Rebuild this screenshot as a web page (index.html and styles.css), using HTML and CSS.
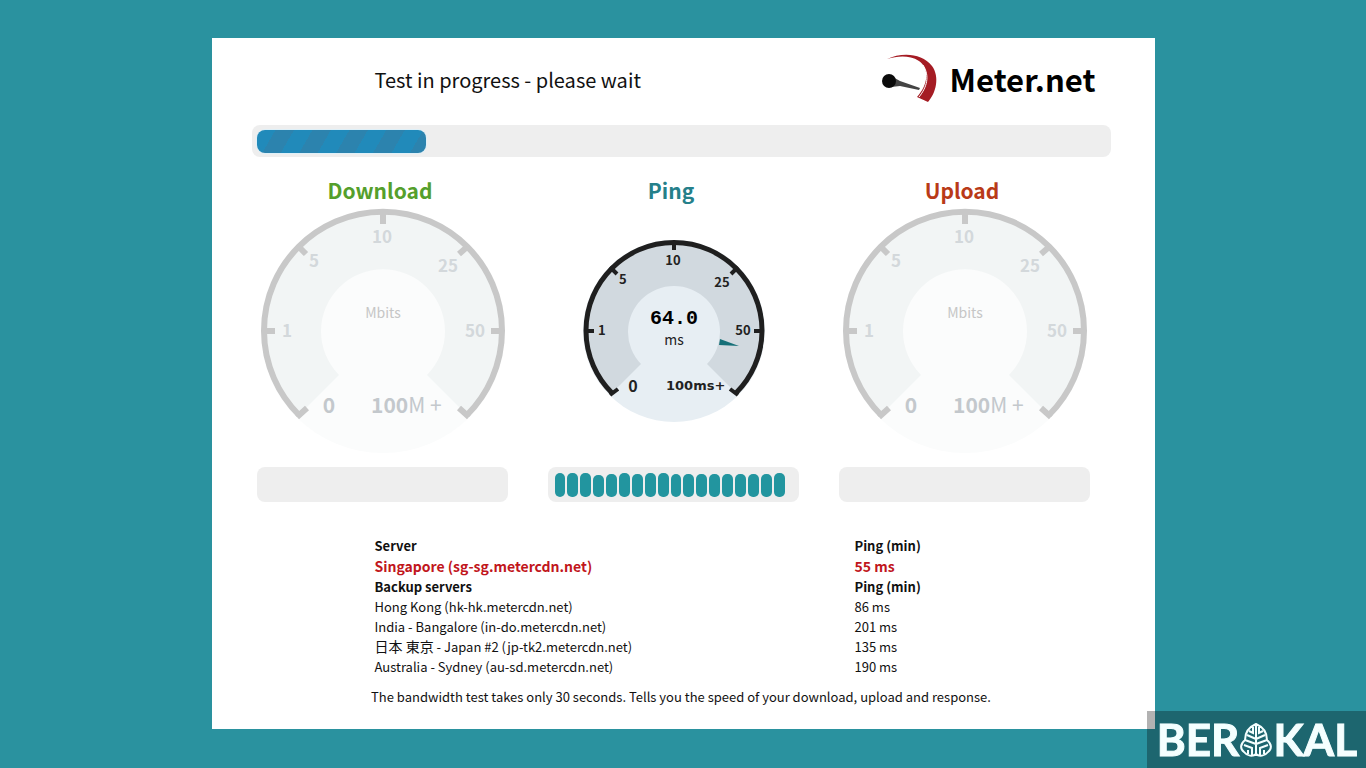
FILE: index.html
```
<!DOCTYPE html>
<html lang="en">
<head>
    <meta charset="UTF-8">
    <meta name="viewport" content="width=device-width, initial-scale=1.0">
    <title>Meter.net - Speed Test</title>
    <link rel="stylesheet" href="styles.css">
</head>
<body>
    <main class="container">
        <header class="header">
            <h1 class="status">Test in progress - please wait</h1>
            <a class="logo" href="#">
                <svg class="logo-icon" viewBox="0 0 66 60" aria-hidden="true">
                    <path d="M11 10 C26 3 46 4 56 17 C64 28 60 44 52 53 L41 48 C52 36 54 20 43 12 C33 6 22 7 11 10Z" fill="#a51c24"/>
                    <path d="M47 16 C54 27 51 38 43 48" fill="none" stroke="#fff" stroke-width="1"/>
                    <path d="M15 27 L24 32 L44 39 L43 41 L24 37 L15 38Z" fill="#444"/>
                    <ellipse cx="13" cy="32" rx="7" ry="7" fill="#0b0b0b"/>
                </svg>
                <span>Meter.net</span>
            </a>
        </header>

        <div class="progress" role="progressbar" aria-valuenow="20" aria-valuemin="0" aria-valuemax="100">
            <div class="progress-fill" style="width: 20%"></div>
        </div>

        <div class="gauges">
            <section class="gauge-col">
                <h2 class="download">Download</h2>
                <svg class="gauge gauge-idle" viewBox="-1 0 244 244">
                    <circle class="face" cx="122" cy="122" r="122"/>
                    <path class="band" d="M37 207 A120 120 0 1 1 207 207 L166 166 A62 62 0 1 0 78 166Z"/>
                    <path class="rim" d="M38 206 A119 119 0 1 1 206 206"/>
                    <path class="ticks" d="M36 208 L46 199 M3 122 H14 M38 38 L45 45 M122 3 V15 M206 38 L198 45 M241 122 H230 M208 208 L198 199"/>
                    <text x="21" y="128">1</text>
                    <text x="48" y="58">5</text>
                    <text x="121" y="34" text-anchor="middle">10</text>
                    <text x="187" y="63" text-anchor="middle">25</text>
                    <text x="214" y="128" text-anchor="middle">50</text>
                    <text class="edge" x="68" y="204" text-anchor="middle">0</text>
                    <text class="edge" x="110" y="204">100<tspan class="light">M +</tspan></text>
                    <text class="unit" x="122" y="109" text-anchor="middle">Mbits</text>
                </svg>
                <div class="bars"></div>
            </section>

            <section class="gauge-col">
                <h2 class="ping">Ping</h2>
                <svg class="gauge gauge-ping" viewBox="-1 0 244 244">
                    <circle class="face" cx="122" cy="122" r="91"/>
                    <path class="band" d="M59 185 A89 89 0 1 1 185 185 L155 155 A46 46 0 1 0 89 155Z"/>
                    <path class="rim" d="M60 184 A88 88 0 1 1 184 184"/>
                    <path class="ticks" d="M58 186 L66 180 M32 122 H42 M58 58 L65 65 M122 32 V41 M186 58 L179 65 M212 122 H202 M186 186 L178 180"/>
                    <path class="needle" d="M168 130 L187 137 L167 136Z"/>
                    <text x="46" y="126">1</text>
                    <text x="67" y="75">5</text>
                    <text x="121" y="56" text-anchor="middle">10</text>
                    <text x="170" y="78" text-anchor="middle">25</text>
                    <text x="191" y="126" text-anchor="middle">50</text>
                    <text class="edge" x="81" y="183" text-anchor="middle">0</text>
                    <text class="max" x="114" y="181">100ms+</text>
                    <text class="value" x="122" y="115" text-anchor="middle">64.0</text>
                    <text class="unit" x="122" y="136" text-anchor="middle">ms</text>
                </svg>
                <div class="bars">
                    <i></i><i></i><i></i><i class="low"></i><i class="mid"></i><i></i><i class="mid"></i><i></i><i></i>
                    <i class="mid"></i><i class="mid"></i><i class="mid"></i><i class="mid"></i><i class="mid"></i><i class="mid"></i><i class="mid"></i><i class="mid"></i><i></i>
                </div>
            </section>

            <section class="gauge-col">
                <h2 class="upload">Upload</h2>
                <svg class="gauge gauge-idle" viewBox="-1 0 244 244">
                    <circle class="face" cx="122" cy="122" r="122"/>
                    <path class="band" d="M37 207 A120 120 0 1 1 207 207 L166 166 A62 62 0 1 0 78 166Z"/>
                    <path class="rim" d="M38 206 A119 119 0 1 1 206 206"/>
                    <path class="ticks" d="M36 208 L46 199 M3 122 H14 M38 38 L45 45 M122 3 V15 M206 38 L198 45 M241 122 H230 M208 208 L198 199"/>
                    <text x="21" y="128">1</text>
                    <text x="48" y="58">5</text>
                    <text x="121" y="34" text-anchor="middle">10</text>
                    <text x="187" y="63" text-anchor="middle">25</text>
                    <text x="214" y="128" text-anchor="middle">50</text>
                    <text class="edge" x="68" y="204" text-anchor="middle">0</text>
                    <text class="edge" x="110" y="204">100<tspan class="light">M +</tspan></text>
                    <text class="unit" x="122" y="109" text-anchor="middle">Mbits</text>
                </svg>
                <div class="bars"></div>
            </section>
        </div>

        <table class="servers">
            <tr><th>Server</th><th>Ping (min)</th></tr>
            <tr class="selected"><td>Singapore (sg-sg.metercdn.net)</td><td>55 ms</td></tr>
            <tr><th>Backup servers</th><th>Ping (min)</th></tr>
            <tr><td>Hong Kong (hk-hk.metercdn.net)</td><td>86 ms</td></tr>
            <tr><td>India - Bangalore (in-do.metercdn.net)</td><td>201 ms</td></tr>
            <tr><td><span class="native" lang="ja">日本 東京</span> - Japan #2 (jp-tk2.metercdn.net)</td><td>135 ms</td></tr>
            <tr><td>Australia - Sydney (au-sd.metercdn.net)</td><td>190 ms</td></tr>
        </table>

        <p class="note">The bandwidth test takes only 30 seconds. Tells you the speed of your download, upload and response.</p>
    </main>

    <div class="watermark">
        <span>BER</span>
        <svg class="leaf" viewBox="0 0 32 36" aria-hidden="true">
            <path d="M16 2 C9 5 5 11 5 18 C0 22 0 27 4 30 C7 34 13 35 16 32 C19 35 25 34 28 30 C32 27 32 22 27 18 C27 11 23 5 16 2Z M16 3 V32 M13 5 V11 L9 9 M16 17 L7 13 M16 22 L5 18 M12 33 V26 L4 23 M8 32 V28 M19 5 V11 L23 9 M16 17 L25 13 M16 22 L27 18 M20 33 V26 L28 23 M24 32 V28"/>
        </svg>
        <span>KAL</span>
    </div>
</body>
</html>
```
FILE: styles.css
```
* {
    box-sizing: border-box;
}

body {
    margin: 0;
    padding: 38px 20px;
    background-color: #2a929f;
    color: #111;
    font-family: "Noto Sans CJK JP", "Open Sans", sans-serif;
    font-size: 13px;
    line-height: 20px;
}

.container {
    max-width: 943px;
    margin: 0 auto;
    padding: 12px 44px 22px 40px;
    background-color: white;
}

.header {
    display: flex;
    justify-content: space-between;
    align-items: center;
    height: 60px;
    padding: 0 15px 2px 123px;
}

.status {
    margin: 0;
    padding-top: 2px;
    font-size: 20px;
    font-weight: normal;
}

.logo {
    display: flex;
    align-items: center;
    gap: 8px;
    color: #000;
    font-size: 31px;
    font-weight: bold;
    text-decoration: none;
}

.logo-icon {
    width: 66px;
    height: 60px;
}

.progress {
    height: 32px;
    margin-top: 15px;
    padding: 5px;
    background-color: #eee;
    border-radius: 8px;
}

.progress-fill {
    height: 23px;
    border-radius: 8px;
    background: repeating-linear-gradient(120deg, #218aba 0 16px, #2c83ae 16px 32px);
    box-shadow: 0 0 0 1px #dff0f8;
}

.gauges {
    display: grid;
    grid-template-columns: repeat(3, 1fr);
    gap: 40px;
    margin-top: 17px;
    padding: 0 21px 0 5px;
}

.gauge-col {
    text-align: center;
}

.gauge-col h2 {
    margin: 0;
    padding-right: 4px;
    font-size: 21px;
    line-height: 32px;
}

.download {
    color: #559f2c;
}

.ping {
    color: #25808a;
}

.upload {
    color: #b93a18;
}

.gauge {
    display: block;
    width: 244px;
    max-width: 100%;
    margin: 3px auto 14px;
    overflow: visible;
    font-weight: bold;
}

.gauge .rim,
.gauge .ticks {
    fill: none;
}

.gauge-idle {
    fill: #d3d8db;
    font-size: 17px;
}

.gauge-idle .face {
    fill: #fbfcfc;
}

.gauge-idle .band {
    fill: #f2f5f5;
}

.gauge-idle .rim,
.gauge-idle .ticks {
    stroke: #c8c8c8;
    stroke-width: 6px;
}

.gauge-idle .edge {
    fill: #c3c8cc;
    font-size: 21px;
}

.gauge-idle .unit {
    fill: #c6c6c6;
    font-size: 14px;
    font-weight: normal;
}

.gauge .light {
    font-weight: normal;
}

.gauge-ping {
    fill: #222;
    font-size: 13px;
}

.gauge-ping .face {
    fill: #e7eef3;
}

.gauge-ping .band {
    fill: #d1d9df;
}

.gauge-ping .rim {
    stroke: #1f1f1f;
    stroke-width: 5px;
}

.gauge-ping .ticks {
    stroke: #1f1f1f;
    stroke-width: 4px;
}

.gauge-ping .needle {
    fill: #167078;
}

.gauge-ping .edge {
    font-size: 16px;
}

.gauge-ping .max {
    font-family: "DejaVu Sans", sans-serif;
    font-size: 13px;
}

.gauge-ping .value {
    fill: #000;
    font-family: "Liberation Mono", monospace;
    font-size: 20px;
}

.gauge-ping .unit {
    font-size: 14px;
    font-weight: normal;
}

.bars {
    display: flex;
    align-items: flex-end;
    gap: 2px;
    height: 35px;
    padding: 5px 14px 5px 7px;
    background-color: #eee;
    border-radius: 8px;
}

.bars i {
    flex: 1;
    height: 24px;
    background-color: #22959f;
    border-radius: 5px;
}

.bars .mid {
    height: 23px;
}

.bars .low {
    height: 22px;
}

.servers {
    width: 100%;
    margin-top: 34px;
    border-collapse: collapse;
    text-align: left;
}

.servers th,
.servers td {
    padding: 0;
}

.servers th:first-child,
.servers td:first-child {
    width: 603px;
    padding-left: 123px;
}

.servers .selected td {
    color: #c1161c;
    font-size: 14px;
    font-weight: bold;
    line-height: 21px;
}

.native {
    font-size: 14px;
    line-height: 1;
}

.note {
    margin: 10px 0 0;
    text-align: center;
}

.watermark {
    position: fixed;
    right: 0;
    bottom: 0;
    display: flex;
    align-items: center;
    gap: 1px;
    height: 57px;
    padding: 0 9px 0 10px;
    background-color: rgba(0, 0, 0, 0.3);
    color: #f4ffff;
    font-family: Lato, sans-serif;
    font-size: 44px;
    font-weight: bold;
    line-height: 57px;
    -webkit-text-stroke: 1px #f4ffff;
}

.leaf {
    width: 32px;
    height: 36px;
    fill: none;
    stroke: #f4ffff;
    stroke-width: 2px;
}
```
